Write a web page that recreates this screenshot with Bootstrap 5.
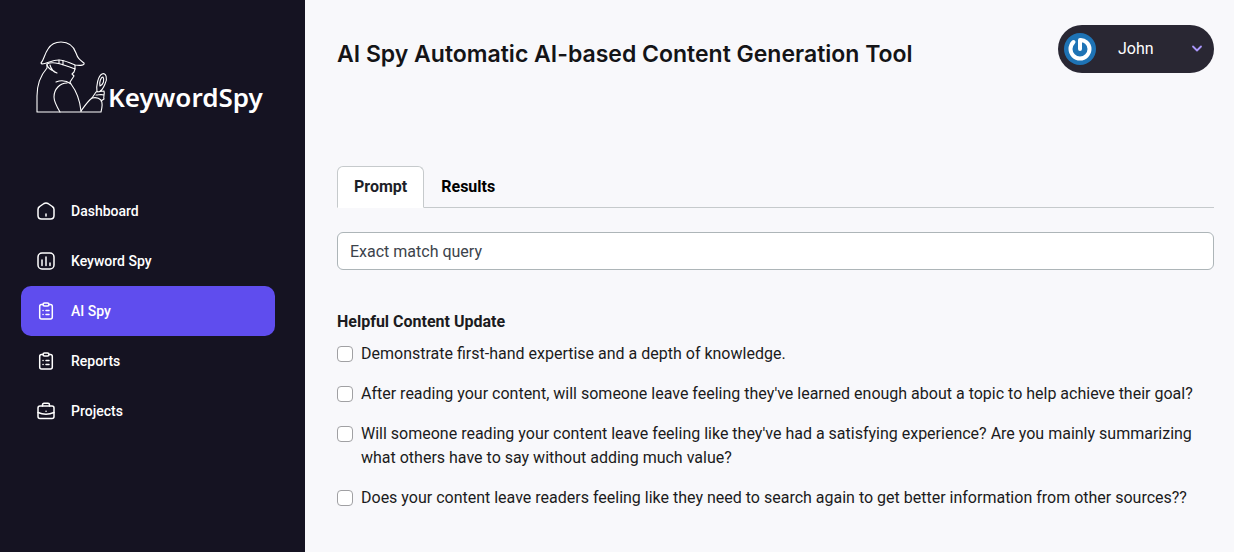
<!DOCTYPE html>
<html lang="en">
<head>
<meta charset="utf-8">
<meta name="viewport" content="width=device-width, initial-scale=1">
<title>KeywordSpy - AI Spy</title>
<link href="https://cdn.jsdelivr.net/npm/bootstrap@5.3.0/dist/css/bootstrap.min.css" rel="stylesheet">
<style>
body { font-family: Roboto, Inter, sans-serif; font-size: 16px; line-height: 24px; color: #1b1b20; background: #f8f8fb; }
.sidebar { width: 305px; background: #151322; padding: 41px 30px 24px 21px; }
.brand { padding-left: 15px; margin-bottom: 71px; height: 74px; }
.brand-name { font-family: "Noto Sans", sans-serif; font-size: 26px; line-height: 36px; font-weight: 600; }
.side-link { height: 50px; padding: 0 16px; gap: 16px; border-radius: 10px; color: #fff; font-size: 14px; font-weight: 500; }
.side-link:hover { color: #fff; }
.side-link.active { background: #5f4dee; }
.side-link svg { width: 18px; height: 18px; fill: none; stroke: #fff; stroke-width: 1.5; stroke-linecap: round; stroke-linejoin: round; }
.content { padding: 25px 20px 24px 32px; }
.page-header { margin-bottom: 93px; }
.page-title { font-family: Inter, sans-serif; font-size: 23px; line-height: 32px; font-weight: 600; color: #141417; padding-top: 13px; }
.user-btn { width: 156px; height: 48px; padding: 0 11px 0 6px; border: 0; border-radius: 24px; background: #292733; color: #fff; font-size: 16px; }
.user-name { padding-left: 22px; }
.nav-tabs { --bs-nav-tabs-border-color: #c6cacc; --bs-nav-tabs-link-active-border-color: #c6cacc #c6cacc #fff; margin-bottom: 24px; }
.nav-tabs .nav-link { color: #000; font-weight: 700; }
.nav-tabs .nav-link.active { color: #1d1f29; }
.query { height: 38px; border-color: #adb5b8; margin-bottom: 40px; }
.query::placeholder { color: #3c434b; }
.group-title { font-size: 16px; line-height: 24px; font-weight: 700; }
.form-check { padding-left: 24px; margin-bottom: 16px; min-height: 24px; }
.form-check .form-check-input { width: 16px; height: 16px; margin-left: -24px; margin-top: 4px; border-color: #a0a0a3; }
</style>
</head>
<body>
<div class="d-flex min-vh-100">
  <aside class="sidebar flex-shrink-0">
    <a href="#" class="brand d-flex align-items-end text-white text-decoration-none">
      <svg width="72" height="74" viewBox="0 0 72 74" fill="none" stroke="#fff" stroke-width="1.1" stroke-linecap="round" stroke-linejoin="round" aria-hidden="true">
        <path d="M5 22C8 19 8 14 12 8C15 3 19 1 25 1C33 1 38 6 40 12C42 18 44 19 48 22C49 24 45 25 39 24C33 22 29 19 23 19C16 19 12 22 6 23Z"/>
        <path d="M23 19v3M27 20v4M11 23C17 20 26 23 39 28V24M11 24c1 3 4 5 7 6M14 24c1 4 4 7 7 8"/>
        <path d="M11 23V27C4 35 1 44 1 55V71H65C66 67 67 62 65 59C63 57 60 56 56 57C51 61 48 66 45 70"/>
        <path d="M39 28L38 31L36 33L38 35L34 41L35 43C41 51 44 60 45 70M20 41C25 39 31 40 35 43M31 42C24 42 18 48 18 56C18 61 21 66 24 71"/>
        <path d="M61 51C60 45 62 35 66 33C70 31 72 38 69 43C67 48 65 50 63 51M64 45C63 41 65 36 67 36C69 39 67 44 64 45M56 57L60 51L68 50C69 53 67 56 68 58L65 60M60 54C63 54 65 53 68 54"/>
      </svg>
      <span class="brand-name">KeywordSpy</span>
    </a>
    <nav class="d-flex flex-column">
      <a href="#" class="side-link d-flex align-items-center text-decoration-none">
        <svg viewBox="0 0 18 18"><path d="M1 7.500Q1 5.500 2.700 4.500L7 1.500Q9 .4 11 1.500L15.300 4.500Q17 5.500 17 7.500V13.500Q17 17 13.500 17H4.500Q1 17 1 13.500ZM9 12v2"/></svg>Dashboard</a>
      <a href="#" class="side-link d-flex align-items-center text-decoration-none">
        <svg viewBox="0 0 18 18"><rect x="1" y="1" width="16" height="16" rx="4"/><path d="M5 8v5.500M9 5v8.500M13 11v2.500"/></svg>Keyword Spy</a>
      <a href="#" class="side-link active d-flex align-items-center text-decoration-none" aria-current="page">
        <svg viewBox="0 0 18 18"><path d="M6 2.500H4.500Q2.700 2.500 2.700 4.500V15Q2.700 17 4.500 17H13.500Q15.300 17 15.300 15V4.500Q15.300 2.500 13.500 2.500H12"/><rect x="6" y="1" width="6" height="3" rx="1.500"/><path d="M6 8.500h.1M9 8.500h3M6 12.500h.1M9 12.500h3"/></svg>AI Spy</a>
      <a href="#" class="side-link d-flex align-items-center text-decoration-none">
        <svg viewBox="0 0 18 18"><path d="M6 2.500H4.500Q2.700 2.500 2.700 4.500V15Q2.700 17 4.500 17H13.500Q15.300 17 15.300 15V4.500Q15.300 2.500 13.500 2.500H12"/><rect x="6" y="1" width="6" height="3" rx="1.500"/><path d="M6 8.500h.1M9 8.500h3M6 12.500h.1M9 12.500h3"/></svg>Reports</a>
      <a href="#" class="side-link d-flex align-items-center text-decoration-none">
        <svg viewBox="0 0 18 18"><rect x="1" y="4" width="16" height="12.500" rx="2"/><path d="M5.500 4V3Q5.500 1.300 7 1.300H11Q12.500 1.300 12.500 3V4M1 10.500q8 3.500 16 0M9 9.300h.1"/></svg>Projects</a>
    </nav>
  </aside>

  <main class="content flex-grow-1">
    <header class="page-header d-flex justify-content-between">
      <h1 class="page-title mb-0">AI Spy Automatic AI-based Content Generation Tool</h1>
      <button type="button" class="user-btn d-flex align-items-center flex-shrink-0">
        <svg width="32" height="32" viewBox="0 0 32 32" fill="none" stroke="#fff" stroke-width="4" stroke-linecap="round" aria-hidden="true"><circle cx="16" cy="16" r="16" fill="#1e73b5" stroke="none"/><path d="M16 7v9M16 7C20.500 6.500 25.500 10.500 25.500 16A9.500 9.500 0 0 1 6.500 16C6.500 13 8 10.500 9.500 9"/></svg>
        <span class="user-name">John</span>
        <svg class="ms-auto" width="12" height="12" viewBox="0 0 12 12" fill="none" stroke="#a996fa" stroke-width="1.800" stroke-linecap="round" stroke-linejoin="round" aria-hidden="true"><path d="M2 3.500l4 4 4-4"/></svg>
      </button>
    </header>

    <ul class="nav nav-tabs" role="tablist">
      <li class="nav-item" role="presentation"><button class="nav-link active" type="button" role="tab" aria-selected="true">Prompt</button></li>
      <li class="nav-item" role="presentation"><button class="nav-link" type="button" role="tab" aria-selected="false">Results</button></li>
    </ul>

    <form>
      <input type="text" class="form-control query" placeholder="Exact match query" aria-label="Exact match query">
      <h2 class="group-title mb-2">Helpful Content Update</h2>
      <div class="form-check">
        <input class="form-check-input" type="checkbox" id="c1">
        <label class="form-check-label" for="c1">Demonstrate first-hand expertise and a depth of knowledge.</label>
      </div>
      <div class="form-check">
        <input class="form-check-input" type="checkbox" id="c2">
        <label class="form-check-label" for="c2">After reading your content, will someone leave feeling they've learned enough about a topic to help achieve their goal?</label>
      </div>
      <div class="form-check">
        <input class="form-check-input" type="checkbox" id="c3">
        <label class="form-check-label" for="c3">Will someone reading your content leave feeling like they've had a satisfying experience? Are you mainly summarizing what others have to say without adding much value?</label>
      </div>
      <div class="form-check">
        <input class="form-check-input" type="checkbox" id="c4">
        <label class="form-check-label" for="c4">Does your content leave readers feeling like they need to search again to get better information from other sources??</label>
      </div>
    </form>
  </main>
</div>
<script src="https://cdn.jsdelivr.net/npm/bootstrap@5.3.0/dist/js/bootstrap.bundle.min.js"></script>
</body>
</html>
